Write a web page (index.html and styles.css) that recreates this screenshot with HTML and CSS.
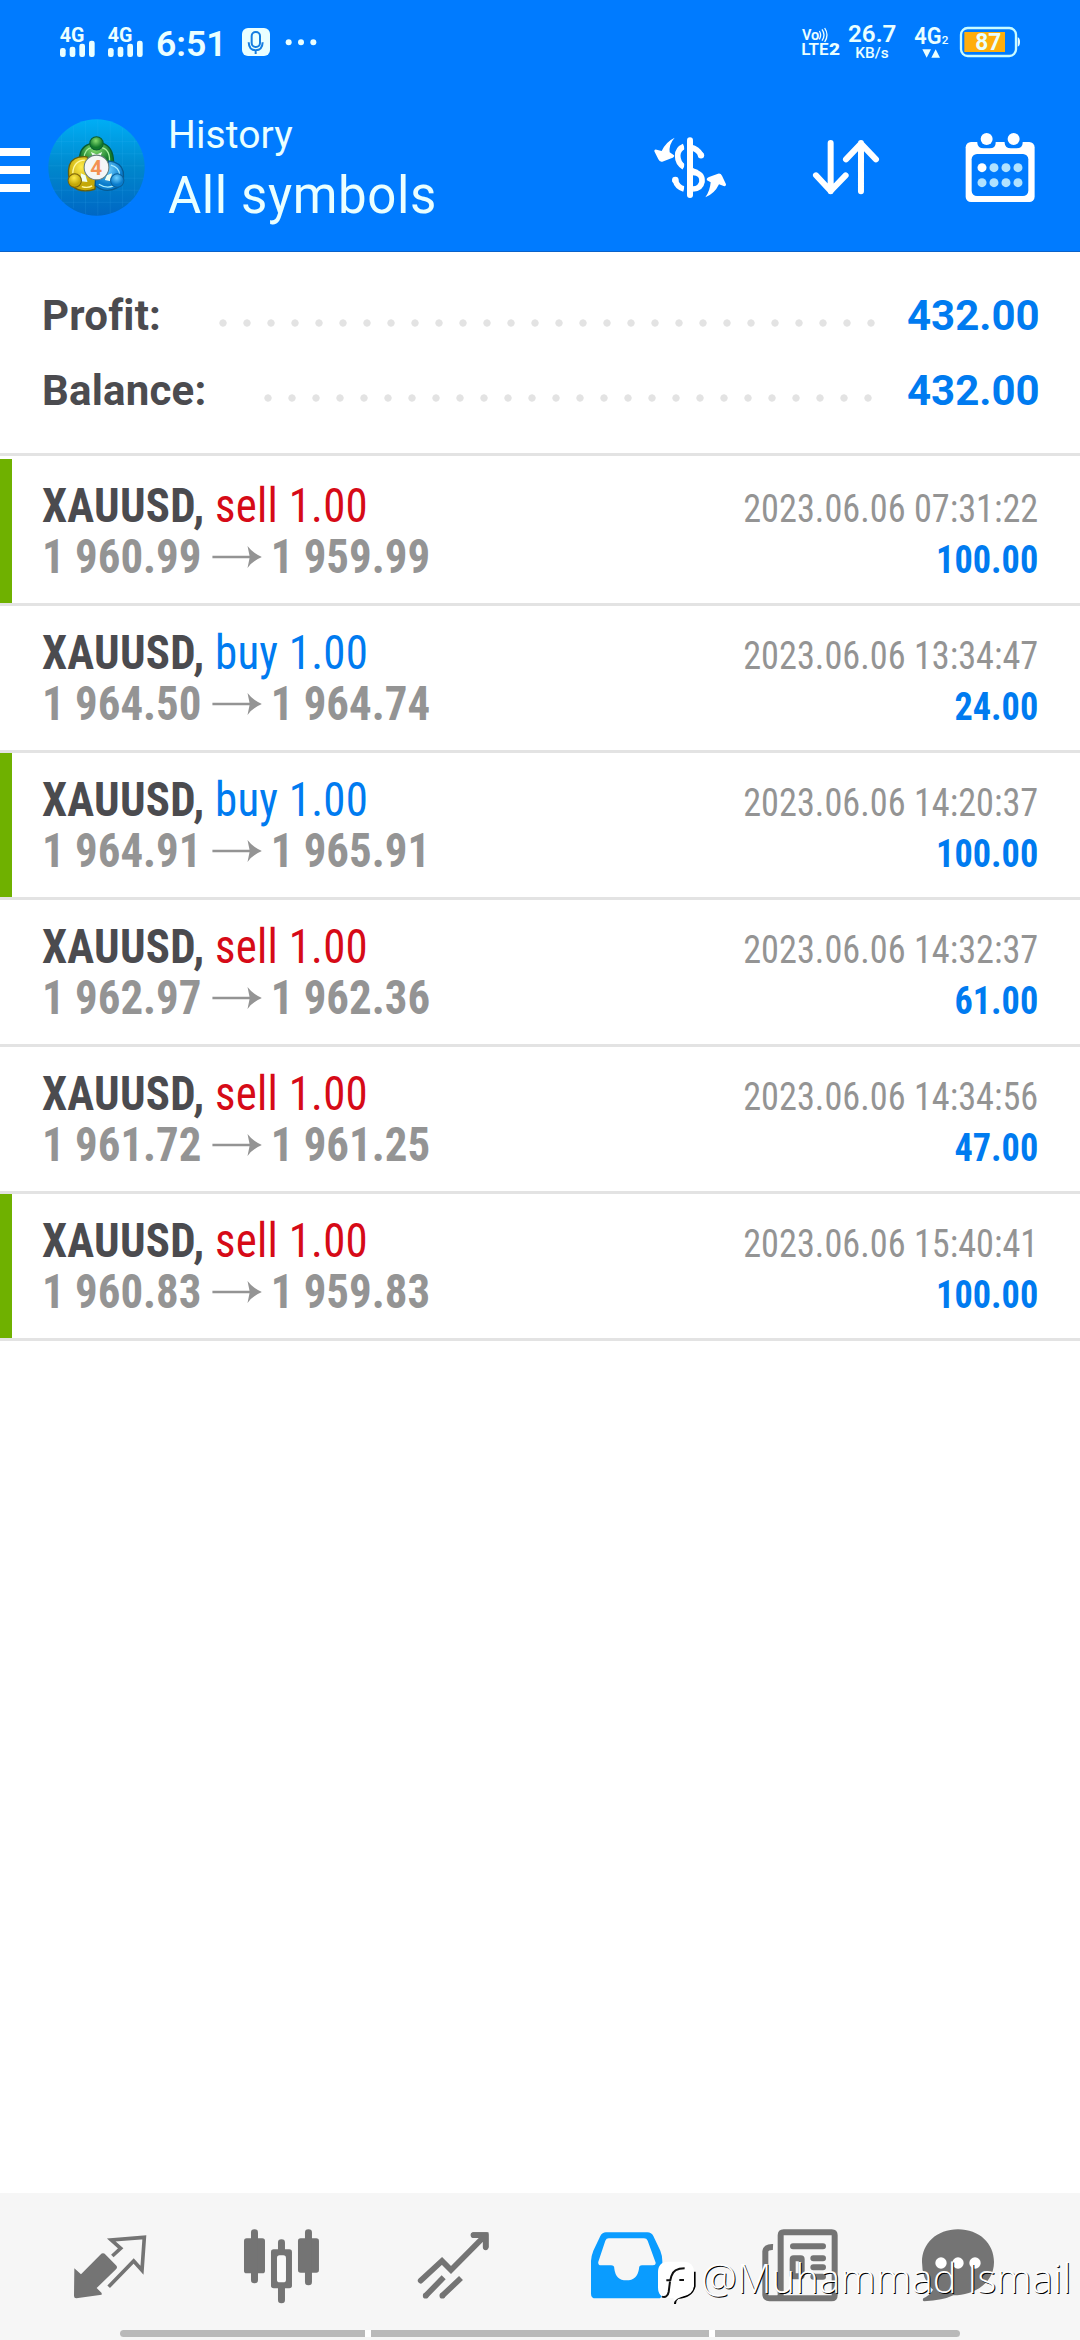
FILE: index.html
```html
<!DOCTYPE html>
<html lang="en">
<head>
<meta charset="utf-8">
<title>History</title>
<link rel="stylesheet" href="styles.css">
</head>
<body>
<div class="screen">
  <div class="status">
    <svg class="status-left" viewBox="0 0 900 210" width="300" height="70" fill="#eaffff">
      <g id="sig">
        <text x="59" y="95" class="net" textLength="74" lengthAdjust="spacingAndGlyphs">4G</text>
        <rect x="60" y="114" width="17" height="27" rx="7"/><rect x="89" y="110" width="17" height="31" rx="7"/><rect x="118" y="101" width="17" height="40" rx="7"/><rect x="147" y="92" width="17" height="49" rx="7"/>
      </g>
      <use href="#sig" x="144"/>
      <text x="348" y="137" class="clock" textLength="212" lengthAdjust="spacingAndGlyphs">6:51</text>
      <rect x="606" y="54" width="84" height="84" rx="18"/>
      <rect x="635" y="66" width="25" height="45" rx="12" fill="none" stroke="#157de0" stroke-width="6"/>
      <path d="M626 97Q627 121 647 121T668 97M647 121V132" fill="none" stroke="#157de0" stroke-width="6"/>
      <circle cx="746" cy="97" r="9"/><circle cx="783" cy="97" r="9"/><circle cx="820" cy="97" r="9"/>
    </svg>
    <svg class="status-right" viewBox="0 0 780 210" width="260" height="70" fill="#eaffff">
      <text x="66" y="91" class="vo" textLength="52" lengthAdjust="spacingAndGlyphs">Vo</text>
      <path d="M118 63Q126 75 118 88M126 58Q138 75 126 92M134 54Q148 75 134 96" fill="none" stroke="#eaffff" stroke-width="4"/>
      <text x="64" y="135" class="lte" textLength="82" lengthAdjust="spacingAndGlyphs">LTE</text>
      <text x="147" y="135" class="lte heavy" textLength="33" lengthAdjust="spacingAndGlyphs">2</text>
      <text x="204" y="96" class="speed" textLength="145" lengthAdjust="spacingAndGlyphs">26.7</text>
      <text x="226" y="144" class="unit" textLength="100" lengthAdjust="spacingAndGlyphs">KB/s</text>
      <text x="403" y="101" class="speed" textLength="82" lengthAdjust="spacingAndGlyphs">4G</text>
      <text x="485" y="102" class="sub" textLength="20" lengthAdjust="spacingAndGlyphs">2</text>
      <path d="M427 118h26l-13 25zM454 143h26l-13-25z"/>
      <rect x="543" y="54" width="165" height="84" rx="20" fill="none" stroke="#c9fbff" stroke-width="7"/>
      <rect x="553" y="66" width="122" height="60" fill="#ffae0c"/>
      <path d="M713 82q7 2 7 14t-7 14z"/>
      <text x="586" y="119" class="batt" textLength="78" lengthAdjust="spacingAndGlyphs">87</text>
    </svg>
  </div>
  <header class="bar">
    <div class="burger"><i></i><i></i><i></i></div>
    <svg class="logo" viewBox="144 58 290 290" width="97" height="97">
      <defs>
        <linearGradient id="bg" x1="0" y1="0" x2="0" y2="1"><stop offset="0" stop-color="#00aef5"/><stop offset=".5" stop-color="#0087cc"/><stop offset="1" stop-color="#0067c4"/></linearGradient>
        <radialGradient id="g" cx=".45" cy=".3"><stop offset="0" stop-color="#85dc6f"/><stop offset="1" stop-color="#127a2b"/></radialGradient>
        <radialGradient id="y" cx=".45" cy=".3"><stop offset="0" stop-color="#ffec4a"/><stop offset="1" stop-color="#c4a808"/></radialGradient>
        <radialGradient id="b" cx=".45" cy=".3"><stop offset="0" stop-color="#6fd0ff"/><stop offset="1" stop-color="#0a7ccc"/></radialGradient>
      </defs>
      <circle cx="289" cy="203" r="144" fill="url(#bg)"/>
      <path d="M184 105V300M220 80V325M256 64V342M293 60V346M330 66V340M367 85V320M403 120V287M168 125H410M150 162H428M146 198H432M148 235H430M160 271H418M188 307H392" stroke="#4dc4ff" stroke-opacity=".18" stroke-width="2" fill="none"/>
      <path d="M238 185Q236 145 265 134Q290 120 315 134Q342 148 340 198L320 204L262 196Z" fill="url(#g)" stroke="#075d35" stroke-width="4"/>
      <path d="M252 178Q251 146 278 143M300 143Q329 146 328 184" fill="none" stroke="#a7efa0" stroke-width="4"/>
      <path d="M260 171Q218 168 208 196Q200 224 214 256Q240 282 284 268L290 230Z" fill="url(#y)" stroke="#665f0b" stroke-width="4"/>
      <path d="M254 181Q220 183 218 220M245 260Q263 266 276 258" fill="none" stroke="#fff9a0" stroke-width="4"/>
      <path d="M326 183Q364 188 369 216Q374 250 350 264Q315 282 285 257L286 240Q316 235 326 183Z" fill="url(#b)" stroke="#075a91" stroke-width="4"/>
      <path d="M332 196Q357 202 358 225M296 253Q318 267 340 258" fill="none" stroke="#a8edff" stroke-width="4"/>
      <path d="M272 157L290 164L306 157L298 176H282ZM242 220L256 226L262 246L243 244ZM335 220L320 226L314 240L332 244Z" fill="#effff2"/>
      <circle cx="289" cy="131" r="20" fill="url(#g)" stroke="#0b5f31" stroke-width="3"/>
      <circle cx="224" cy="242" r="20" fill="url(#y)" stroke="#7b620a" stroke-width="3"/>
      <circle cx="351" cy="242" r="20" fill="url(#b)" stroke="#0a5f9b" stroke-width="3"/>
      <circle cx="289" cy="203" r="37" fill="#f4f6f7" stroke="#607a7a" stroke-width="3"/>
      <text x="288" y="225" class="four" text-anchor="middle">4</text>
    </svg>
    <div class="titles"><div class="t1">History</div><div class="t2">All symbols</div></div>
    <svg class="ic-dollar" viewBox="60 70 240 210" width="80" height="70">
      <path d="M213 136Q203 118 182 113M162 110Q143 118 143 138Q143 160 162 172M189 188Q218 190 216 216Q212 237 189 238M162 238Q141 232 136 212" fill="none" stroke="#fff" stroke-width="17"/>
      <circle cx="213" cy="137" r="9.500" fill="#fff"/><circle cx="136" cy="211" r="10" fill="#fff"/>
      <path d="M180 92V256" stroke="#fff" stroke-width="18" stroke-linecap="round"/>
      <path d="M165 90V260" stroke="#007bff" stroke-width="5"/>
      <path d="M180 178Q190 184 202 188" stroke="#fff" stroke-width="14" fill="none"/>
      <path d="M134 84Q116 104 119 128L132 137Q134 143 124 146L97 156Q89 158 85 149L73 125Q72 118 80 120L95 124Q108 96 134 84Z" fill="#fff"/>
      <path d="M226 263Q240 244 242 218L231 212Q228 206 237 202L264 192Q272 190 276 198L288 224Q289 231 281 229L267 224Q254 252 226 263Z" fill="#fff"/>
    </svg>
    <svg class="ic-sort" viewBox="540 80 220 190" width="73.300" height="63.300">
      <path d="M602 101V246M558 198L602 245L647 198M693 246V101M648 150L693 103L738 150" fill="none" stroke="#fff" stroke-width="18" stroke-linecap="round" stroke-linejoin="round"/>
    </svg>
    <svg class="ic-cal" viewBox="1000 60 220 220" width="73.300" height="73.300">
      <rect x="1008" y="93" width="207" height="180" rx="16" fill="#fff"/>
      <path d="M1043 92V96Q1044 112 1062 112H1080Q1098 112 1098 96V92ZM1125 92V96Q1126 112 1144 112H1160Q1179 112 1179 96V92Z" fill="#007bff"/>
      <rect x="1026" y="129" width="170" height="126" rx="16" fill="#007bff"/>
      <circle cx="1071" cy="84" r="18" fill="#fff"/><circle cx="1152" cy="84" r="18" fill="#fff"/>
      <circle cx="1057" cy="170" r="13.500" fill="#fff"/>
      <g fill="#b0e2ff"><circle cx="1093" cy="170" r="13.500"/><circle cx="1129" cy="170" r="13.500"/><circle cx="1165" cy="170" r="13.500"/><circle cx="1057" cy="215" r="13.500"/><circle cx="1093" cy="215" r="13.500"/><circle cx="1129" cy="215" r="13.500"/><circle cx="1165" cy="215" r="13.500"/></g>
    </svg>
  </header>
  <section class="summary">
    <div class="sum"><b>Profit:</b><i class="dots d28"></i><strong>432.00</strong></div>
    <div class="sum"><b>Balance:</b><i class="dots d26"></i><strong>432.00</strong></div>
  </section>
  <main class="deals">
    <svg class="defs" width="0" height="0"><symbol id="arrow" viewBox="0 0 150 66" preserveAspectRatio="none"><path d="M0 29H112L106 0Q122 22 150 33Q122 44 106 66L112 37H0Z" fill="#949494"/></symbol></svg>
    <div class="deal tp"><div class="l"><div class="sym"><b>XAUUSD,</b> <span class="sell">sell 1.00</span></div><div class="px"><span>1 960.99</span><svg><use href="#arrow"/></svg><span>1 959.99</span></div></div><div class="r"><div>2023.06.06 07:31:22</div><strong>100.00</strong></div></div>
    <div class="deal"><div class="l"><div class="sym"><b>XAUUSD,</b> <span class="buy">buy 1.00</span></div><div class="px"><span>1 964.50</span><svg><use href="#arrow"/></svg><span>1 964.74</span></div></div><div class="r"><div>2023.06.06 13:34:47</div><strong>24.00</strong></div></div>
    <div class="deal tp"><div class="l"><div class="sym"><b>XAUUSD,</b> <span class="buy">buy 1.00</span></div><div class="px"><span>1 964.91</span><svg><use href="#arrow"/></svg><span>1 965.91</span></div></div><div class="r"><div>2023.06.06 14:20:37</div><strong>100.00</strong></div></div>
    <div class="deal"><div class="l"><div class="sym"><b>XAUUSD,</b> <span class="sell">sell 1.00</span></div><div class="px"><span>1 962.97</span><svg><use href="#arrow"/></svg><span>1 962.36</span></div></div><div class="r"><div>2023.06.06 14:32:37</div><strong>61.00</strong></div></div>
    <div class="deal"><div class="l"><div class="sym"><b>XAUUSD,</b> <span class="sell">sell 1.00</span></div><div class="px"><span>1 961.72</span><svg><use href="#arrow"/></svg><span>1 961.25</span></div></div><div class="r"><div>2023.06.06 14:34:56</div><strong>47.00</strong></div></div>
    <div class="deal tp"><div class="l"><div class="sym"><b>XAUUSD,</b> <span class="sell">sell 1.00</span></div><div class="px"><span>1 960.83</span><svg><use href="#arrow"/></svg><span>1 959.83</span></div></div><div class="r"><div>2023.06.06 15:40:41</div><strong>100.00</strong></div></div>
  </main>
  <footer class="nav">
    <div class="tabs">
      <svg viewBox="90 140 240 240" width="80" height="80" fill="#747474">
        <path d="M103 264L123 282L181 223Q189 215 197 223L228 255Q234 261 228 267L170 323L185 338V343L109 354Q102 354 102 347Z"/>
        <path d="M217 227L242 204L214 179L313 171L306 270L281 242L206 319" fill="none" stroke="#747474" stroke-width="11"/>
      </svg>
      <svg viewBox="600 140 250 240" width="83.300" height="80" fill="#747474">
        <rect x="612" y="174" width="63" height="105" rx="8"/><rect x="633" y="147" width="21" height="162" rx="10"/>
        <rect x="774" y="174" width="63" height="103" rx="8"/><rect x="795" y="147" width="21" height="168" rx="10"/>
        <rect x="714" y="177" width="21" height="192" rx="10"/><rect x="693" y="207" width="63" height="117" rx="8"/>
        <rect x="711" y="225" width="27" height="81" rx="8" fill="#fafafa"/>
      </svg>
      <svg viewBox="1120 140 240 240" width="80" height="80" fill="none" stroke="#747474" stroke-width="17">
        <path d="M1143 301L1207 242L1234 269L1335 167M1302 164H1338V201" stroke-linecap="round"/>
        <path d="M1293 164Q1293 156 1301 156H1339Q1347 156 1347 164V201Q1338 215 1330 201V186L1318 173H1301Q1293 173 1293 164Z" fill="#747474" stroke="none"/>
        <path d="M1212 291L1158 346M1264 293L1208 346"/>
        <g fill="#747474" stroke="none"><circle cx="1158" cy="346" r="8.500"/><circle cx="1208" cy="346" r="8.500"/></g>
      </svg>
      <svg class="tray" viewBox="80 140 240 240" width="80" height="80">
        <path fill-rule="evenodd" fill="#0a9cff" d="M137 156H261Q273 156 279 167L300 211Q306 226 306 242V340Q306 354 292 354H106Q92 354 92 340V242Q93 226 99 211L120 167Q126 156 137 156ZM145 174Q138 174 135 181L114 244Q112 255 122 255H152Q162 255 162 265Q166 300 198 300Q231 300 236 265Q236 255 245 255H278Q289 254 285 244L262 181Q259 174 251 174Z"/>
      </svg>
      <svg class="news" viewBox="600 140 240 240" width="80" height="80">
        <path d="M639 200Q618 199 616 213V344Q617 353 629 354H815Q824 354 824 344V165Q824 156 815 156H671Q662 156 662 165V344Q662 353 648 354" fill="none" stroke="#747474" stroke-width="18"/>
        <path d="M699 198H789M760 234H789M760 261H789M760 289H789" stroke="#747474" stroke-width="18" stroke-linecap="round"/>
        <rect x="698" y="234" width="27" height="54" rx="3" fill="none" stroke="#747474" stroke-width="18"/>
      </svg>
      <svg class="chat" viewBox="1074 140 240 240" width="80" height="80">
        <path d="M1194 147C1258 147 1302 190 1302 245C1302 310 1240 345 1180 345Q1150 360 1092 363Q1086 362 1090 354Q1110 344 1119 328Q1086 298 1086 245C1086 190 1130 147 1194 147Z" fill="#747474"/>
        <g fill="#fff"><circle cx="1143" cy="248" r="17"/><circle cx="1194" cy="248" r="17"/><circle cx="1245" cy="248" r="17"/></g>
      </svg>
    </div>
    <div class="gesture"><i></i><i></i><i></i></div>
    <div class="mark">
      <svg viewBox="285 235 130 145" width="43.300" height="48.300">
        <path d="M345 373Q346 360 354 355Q396 352 404 320V276" fill="none" stroke="#000" stroke-width="6"/>
        <path d="M325 246H372Q402 246 402 278V318Q400 346 366 351Q350 356 343 366L340 355H325Q294 355 294 323V278Q294 246 325 246Z" fill="#fff"/>
        <path d="M306 351Q322 356 326 337L330 306M319 302H331L334 290Q340 266 374 266M358 301H372" fill="none" stroke="#111" stroke-width="6"/>
      </svg>
      <span>@Muhammad Ismail</span>
    </div>
  </footer>
</div>
</body>
</html>
```
FILE: styles.css
```css
body { margin: 0; background: #fff; font-family: Roboto, "Liberation Sans", sans-serif; }
.screen { width: 1080px; height: 2340px; display: flex; flex-direction: column; overflow: hidden; background: #fff; }
.status { height: 84px; box-sizing: border-box; background: #007bff; display: flex; justify-content: space-between; padding: 10px 40px 0; }
.net { font-size: 58px; font-weight: 700; }
.clock { font-size: 107px; font-weight: 600; }
.vo { font-size: 42px; font-weight: 600; }
.lte { font-size: 47px; font-weight: 600; }
.heavy { font-weight: 900; }
.speed { font-size: 70px; font-weight: 600; }
.unit { font-size: 44px; font-weight: 500; }
.sub { font-size: 34px; font-weight: 500; }
.batt { font-size: 70px; font-weight: 700; }
.bar { height: 168px; box-sizing: border-box; border-bottom: 1px solid #0a62c9; background: #007bff; display: flex; align-items: center; flex: none; }
.burger { width: 30px; display: flex; flex-direction: column; gap: 10px; margin-top: 4px; }
.burger i { height: 8px; background: #fff; }
.logo { margin-left: 18px; }
.four { font-size: 62px; font-weight: 700; fill: #f39152; }
.titles { margin-left: 23px; width: 482px; color: #eaffff; white-space: nowrap; }
.t1 { font-size: 39px; line-height: 56px; letter-spacing: .1px; }
.t2 { font-size: 51px; line-height: 64px; letter-spacing: .6px; padding-top: 1px; }
.ic-sort { margin-left: 80px; }
.ic-cal { margin-left: 80px; }
.summary { height: 204px; box-sizing: border-box; border-bottom: 3px solid #e3e3e3; padding: 26px 42px 0 42px; flex: none; }
.sum { height: 75px; display: flex; align-items: center; justify-content: space-between; font-size: 42px; line-height: 75px; color: #4b4b4f; }
.sum b { font-weight: 700; letter-spacing: .2px; }
.sum strong { color: #007bf0; width: 131px; text-align: right; white-space: nowrap; }
.dots { height: 8px; margin: 15px 0 0 auto; background: radial-gradient(circle, #e3e3e3 3.300px, transparent 4px) 0 0 / 24px 8px repeat-x; }
.d28 { width: 672px; margin-right: 24px; }
.d26 { width: 624px; margin-right: 27px; }
.deals { padding-top: 3px; flex: 1; font-family: "Roboto Condensed", Roboto, sans-serif; font-stretch: 75%; }
.defs { position: absolute; }
.deal { height: 147px; box-sizing: border-box; border-bottom: 3px solid #e3e3e3; display: flex; padding-right: 42px; }
.deal::before { content: ""; width: 12px; }
.tp::before { background: #6fb100; }
.l { flex: 1; margin-left: 30px; padding-top: 21px; font-size: 48px; line-height: 51px; white-space: nowrap; color: #4b4b4f; transform: scaleX(.935); transform-origin: 0 0; }
.sym { letter-spacing: .27px; }
.sell { color: #d60a17; }
.buy { color: #007bf0; }
.px { display: flex; align-items: center; font-weight: 700; color: #949494; }
.px svg { width: 53.500px; height: 22px; margin: 0 9.500px 0 11px; }
.r { padding-top: 25px; font-size: 39px; line-height: 51px; text-align: right; color: #949494; white-space: nowrap; transform: scaleX(.93); transform-origin: 100% 0; }
.r strong { display: block; color: #007bf0; }
.nav { height: 147px; box-sizing: border-box; padding-top: 34px; background: #f6f6f6; position: relative; flex: none; }
.tabs { height: 80px; padding-left: 70px; display: flex; gap: 90px; }
.tray, .news { margin-left: 3.300px; }
.chat { margin-left: -12px; }
.gesture { margin: 23px 120px 0; display: grid; grid-template-columns: 245px 338px 245px; column-gap: 6px; height: 7px; background: #fff; border-radius: 4px; overflow: hidden; }
.gesture i { background: #b9b9b9; }
.mark { position: absolute; left: 655px; top: 65px; display: flex; align-items: center; color: #fff; font: 300 40px/40px "Open Sans", sans-serif; white-space: nowrap; text-shadow: 1px 1px 0 #000; }
.mark span { margin: -8px 0 0 3px; letter-spacing: .15px; }
```
